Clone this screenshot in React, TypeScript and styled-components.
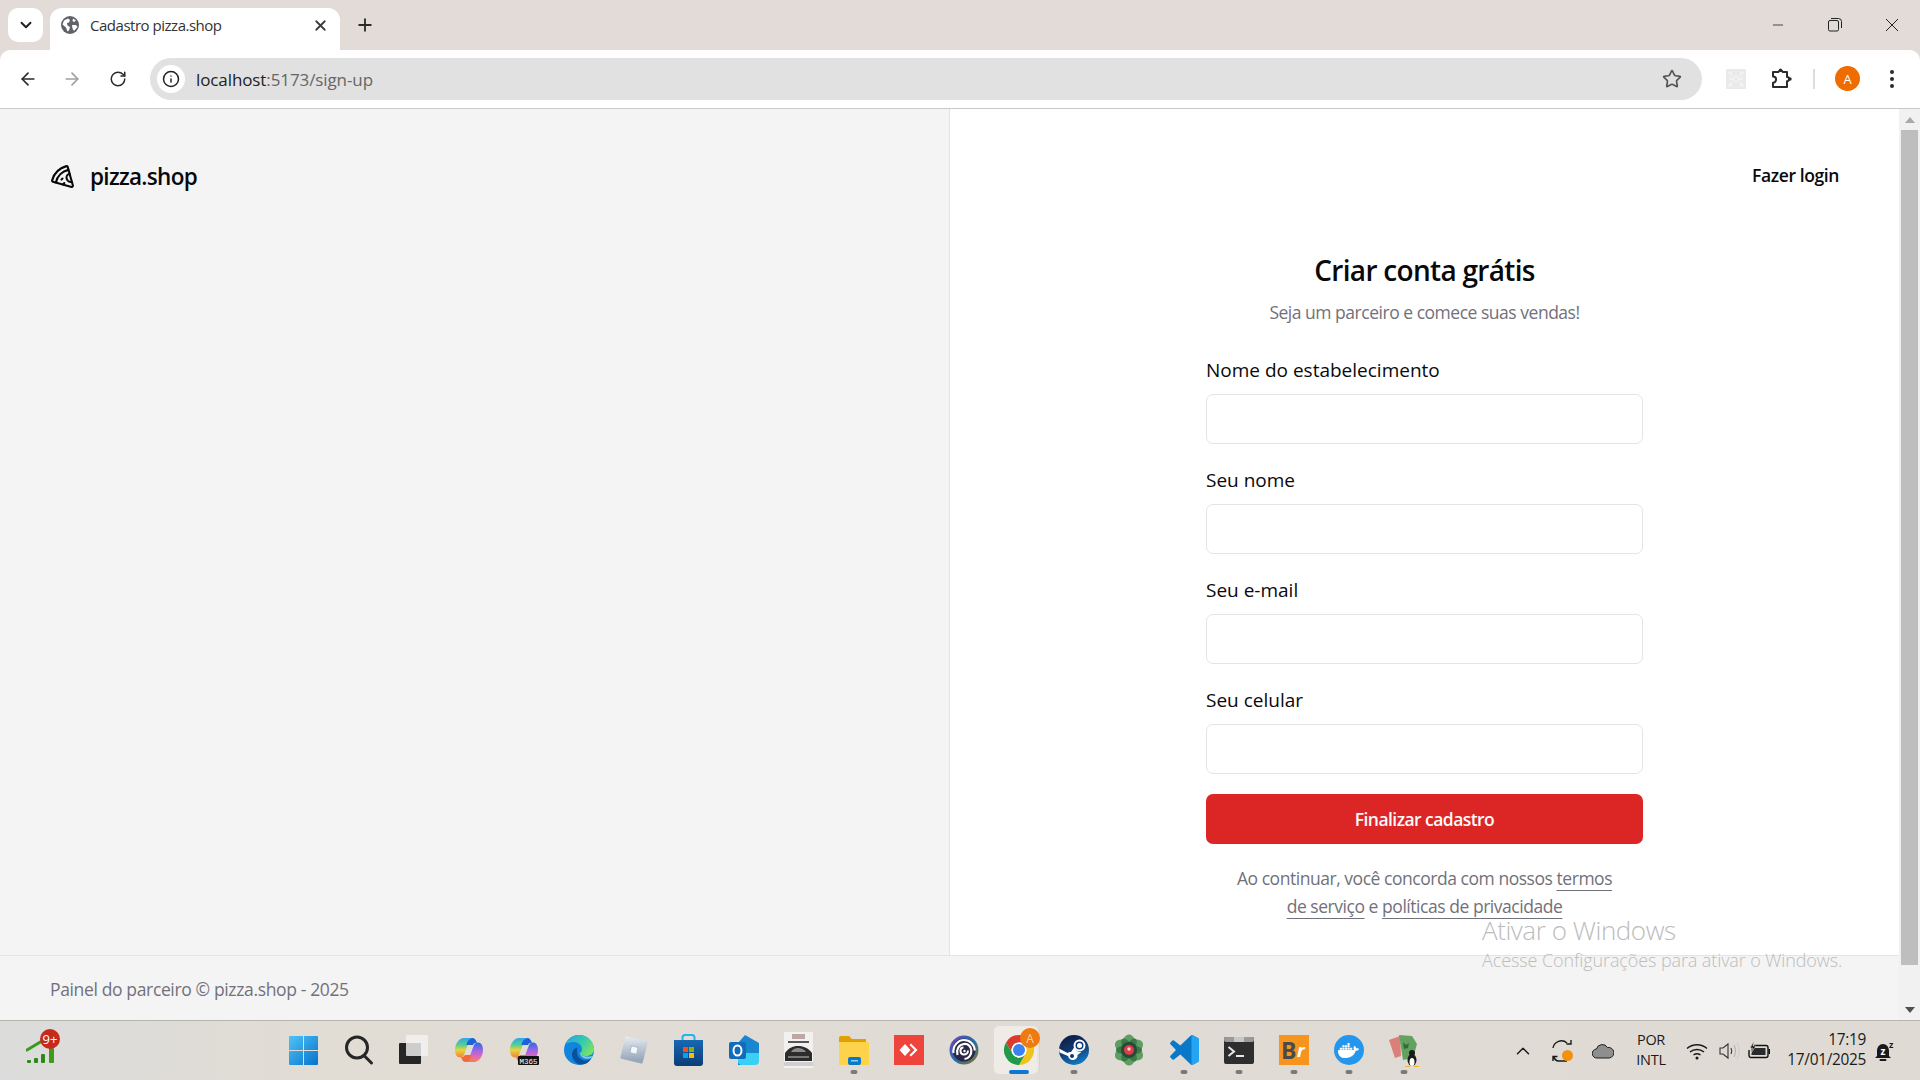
import React from "react";
import styled, { createGlobalStyle } from "styled-components";
import { ArrowLeft, ArrowRight, RotateCw, Info, Star, ChevronDown, ChevronUp, Plus, X, Minus, Pizza } from "lucide-react";
import { SiDocker } from "react-icons/si";

const FONT = `"Open Sans", "Noto Sans", "Liberation Sans", sans-serif`;

const Global = createGlobalStyle`
  html, body { margin: 0; padding: 0; background: #fff; overflow: hidden; }
  * { box-sizing: border-box; }
  body { font-family: ${FONT}; }
`;

const Screen = styled.div`
  position: relative;
  width: 1920px;
  height: 1080px;
  overflow: hidden;
  display: flex;
  flex-direction: column;
`;

const TabStrip = styled.div`
  height: 50px;
  background: #e2dbd8;
  display: flex;
  align-items: flex-start;
  padding-top: 8px;
  padding-left: 8px;
  flex: none;
`;
const TabListButton = styled.button`
  width: 35px;
  height: 34px;
  border: 0;
  border-radius: 10px;
  background: #fff;
  color: #1f1f1f;
  display: flex;
  align-items: center;
  justify-content: center;
  padding: 0;
`;
const Tab = styled.div`
  width: 290px;
  height: 42px;
  margin-left: 7px;
  background: #fff;
  border-radius: 12px 12px 0 0;
  display: flex;
  align-items: center;
  padding: 0 11px 8px 11px;
  gap: 11px;
  color: #3c3c3c;
`;
const TabTitle = styled.span`
  flex: 1;
  font-size: 15px;
  letter-spacing: -0.48px;
  color: #333;
`;
const NewTab = styled.div`
  margin-left: 15px;
  height: 34px;
  display: flex;
  align-items: center;
  color: #2a2a2a;
`;
const WindowControls = styled.div`
  margin-left: auto;
  height: 34px;
  display: flex;
  align-items: center;
  color: #222;
`;
const WindowButton = styled.div`
  width: 57px;
  display: flex;
  justify-content: center;
`;

const Toolbar = styled.div`
  height: 59px;
  flex: none;
  background: #e2dbd8;
`;
const ToolbarInner = styled.div`
  height: 59px;
  background: #fff;
  border-radius: 10px 10px 0 0;
  border-bottom: 1px solid #c9c9c9;
  display: flex;
  align-items: center;
  padding-bottom: 1px;
`;
const NavButton = styled.div<{ $w: number; $dim?: boolean }>`
  width: ${(p) => p.$w}px;
  display: flex;
  justify-content: center;
  color: ${(p) => (p.$dim ? "#a0a0a0" : "#2b2b2b")};
`;
const BackButton = styled(NavButton)`
  padding-left: 2px;
`;
const ReloadButton = styled(NavButton)`
  padding-left: 2px;
`;
const Omnibox = styled.div`
  width: 1552px;
  height: 42px;
  margin-left: 6px;
  background: #e1e1e1;
  border-radius: 21px;
  display: flex;
  align-items: center;
  padding: 0 20px 0 7px;
`;
const InfoChip = styled.div`
  width: 28px;
  height: 28px;
  border-radius: 50%;
  background: #fff;
  display: flex;
  align-items: center;
  justify-content: center;
  color: #222;
`;
const Url = styled.div`
  flex: 1;
  margin-left: 11px;
  padding-top: 2px;
  font-size: 17px;
  letter-spacing: -0.1px;
  color: #666;
`;
const UrlHost = styled.span`
  color: #222;
`;
const ToolGroup = styled.div`
  flex: 1;
  display: flex;
  align-items: center;
  padding-left: 24px;
`;
const PuzzleSlot = styled.div`
  width: 50px;
  margin-left: 10px;
  padding-left: 1px;
  display: flex;
  justify-content: center;
`;
const ToolDivider = styled.div`
  width: 2px;
  height: 20px;
  background: #e2dbd8;
  margin: 0 20px 0 7px;
`;
const Avatar = styled.div`
  width: 25px;
  height: 25px;
  border-radius: 50%;
  background: #ef6c00;
  color: #fff;
  font-size: 13px;
  display: flex;
  align-items: center;
  justify-content: center;
`;
const MenuDots = styled.div`
  margin-left: 30px;
  display: flex;
  flex-direction: column;
  gap: 3px;
`;
const MenuDot = styled.span`
  width: 4px;
  height: 4px;
  border-radius: 50%;
  background: #2b2b2b;
`;

const Viewport = styled.div`
  flex: 1;
  display: flex;
  min-height: 0;
`;
const Content = styled.div`
  flex: 1;
  display: flex;
  flex-direction: column;
`;
const Split = styled.div`
  height: 846px;
  display: flex;
  flex: none;
`;
const LeftPanel = styled.section`
  width: 950px;
  flex: none;
  background: #f4f4f5;
  border-right: 1px solid #e4e4e7;
  padding: 50px;
`;
const Brand = styled.div`
  display: flex;
  align-items: center;
  gap: 15px;
  height: 35px;
  color: #09090b;
`;
const BrandName = styled.span`
  font-size: 22.5px;
  font-weight: 600;
  letter-spacing: -0.7px;
`;
const RightPanel = styled.section`
  flex: 1;
  background: #fff;
  display: flex;
  flex-direction: column;
  align-items: center;
`;
const TopBar = styled.div`
  align-self: stretch;
  display: flex;
  justify-content: flex-end;
  padding: 49px 60px 0 0;
  height: 85px;
`;
const LoginLink = styled.a`
  font-size: 17.5px;
  font-weight: 600;
  letter-spacing: -0.4px;
  line-height: 35px;
  color: #09090b;
`;
const Form = styled.div`
  width: 437px;
  margin-top: 58px;
  display: flex;
  flex-direction: column;
`;
const Title = styled.h1`
  margin: 0;
  font-size: 28px;
  line-height: 36px;
  font-weight: 600;
  text-align: center;
  letter-spacing: -0.7px;
  color: #09090b;
`;
const Subtitle = styled.p`
  margin: 12px 0 35px;
  font-size: 17.5px;
  line-height: 25px;
  text-align: center;
  letter-spacing: -0.48px;
  color: #71717a;
`;
const Field = styled.div`
  display: flex;
  flex-direction: column;
  gap: 14px;
  margin-bottom: 26px;
`;
const Label = styled.label`
  font-size: 19px;
  line-height: 20px;
  letter-spacing: 0;
  color: #09090b;
`;
const Input = styled.input`
  height: 50px;
  border: 1px solid #e4e4e7;
  border-radius: 7px;
  background: #fff;
  outline: none;
`;
const Submit = styled.button`
  height: 50px;
  margin-top: -6px;
  border: 0;
  border-radius: 7px;
  background: #dc2626;
  color: #fafafa;
  font-family: ${FONT};
  font-size: 17.5px;
  font-weight: 600;
  letter-spacing: -0.55px;
`;
const Terms = styled.p`
  margin: 20px 0 0;
  font-size: 17.5px;
  line-height: 28px;
  text-align: center;
  letter-spacing: -0.46px;
  color: #71717a;
`;
const TermsLink = styled.a`
  text-decoration: underline;
  text-underline-offset: 5px;
`;
const Footer = styled.footer`
  flex: 1;
  background: #f4f4f5;
  border-top: 1px solid #e4e4e7;
  padding: 21px 50px 0;
  font-size: 17.5px;
  line-height: 24px;
  letter-spacing: -0.36px;
  color: #71717a;
`;
const Scrollbar = styled.div`
  width: 21px;
  flex: none;
  background: #f1f1f1;
  display: flex;
  flex-direction: column;
  align-items: center;
  padding: 0 1px;
`;
const ScrollArrow = styled.div<{ $up?: boolean; $color: string }>`
  height: 21px;
  flex: none;
  display: flex;
  align-items: center;
  &::before {
    content: "";
    border-left: 5px solid transparent;
    border-right: 5px solid transparent;
    ${(p) => (p.$up ? "border-bottom" : "border-top")}: 6px solid ${(p) => p.$color};
  }
`;
const ScrollThumb = styled.div`
  width: 17px;
  height: 835px;
  flex: none;
  background: #bebebe;
`;
const ScrollSpace = styled.div`
  flex: 1;
`;

const Watermark = styled.div`
  position: absolute;
  left: 1482px;
  top: 911px;
  pointer-events: none;
  color: #bcbcbc;
`;
const WatermarkTitle = styled.div`
  font-size: 26px;
  line-height: 38px;
  letter-spacing: -0.45px;
  font-weight: 300;
`;
const WatermarkText = styled.div`
  font-size: 18px;
  line-height: 22px;
  letter-spacing: -0.1px;
  font-weight: 300;
`;

const Taskbar = styled.div`
  height: 60px;
  flex: none;
  background: linear-gradient(90deg, #dcdcdc 0, #e1dcd4 320px, #dfdbd4 100%);
  border-top: 1px solid #b7b5b0;
  display: flex;
  align-items: stretch;
`;
const Widgets = styled.div`
  width: 276px;
  flex: none;
  padding: 8px 0 0 26px;
`;
const TaskRow = styled.div`
  display: flex;
  width: 1155px;
  flex: none;
`;
const TaskSlot = styled.div<{ $active?: boolean }>`
  position: relative;
  width: 55px;
  height: 59px;
  display: flex;
  align-items: center;
  justify-content: center;
  padding-bottom: 1px;
  ${(p) =>
    p.$active &&
    `&::before {
      content: "";
      position: absolute;
      left: 3px; right: 9px; top: 5px; bottom: 6px;
      background: #efece7;
      border-radius: 5px;
      box-shadow: 2px 0 0 #e8e4de, 3px 0 0 #d6d3cd;
    }`}
  & > svg { position: relative; overflow: visible; }
`;
const RunDot = styled.span<{ $active?: boolean }>`
  position: absolute;
  left: 50%;
  bottom: 6px;
  transform: translateX(-50%);
  width: ${(p) => (p.$active ? 20 : 7)}px;
  height: 4px;
  border-radius: 2px;
  background: ${(p) => (p.$active ? "#0a78d4" : "#7a7a7a")};
`;
const Tray = styled.div`
  flex: 1;
  display: flex;
  align-items: center;
  padding-left: 72px;
  color: #1a1a1a;
`;
const TraySlot = styled.div<{ $w: number }>`
  width: ${(p) => p.$w}px;
  flex: none;
  display: flex;
  justify-content: center;
  align-items: center;
`;
const TrayText = styled.div`
  font-size: 14.5px;
  line-height: 20px;
  margin-top: -2px;
  text-align: center;
  letter-spacing: -0.3px;
  color: #1a1a1a;
`;
const Clock = styled.div`
  width: 92px;
  flex: none;
  font-size: 15.4px;
  line-height: 20px;
  margin-top: -2px;
  text-align: right;
  letter-spacing: -0.3px;
  color: #1a1a1a;
`;
const DockerTile = styled.div`
  width: 30px;
  height: 30px;
  border-radius: 50%;
  background: #2496ed;
  display: flex;
  align-items: center;
  justify-content: center;
  color: #fff;
`;

const Globe = () => (
  <svg width="18" height="18" viewBox="0 0 18 18">
    <circle cx="9" cy="9" r="9" fill="#5f6368" />
    <path d="M3 4.500 7 2.500 9 4 8 6.500 6 7 6.500 9.500 9 11 8 14.500 6.500 15.500 5 11.500 1.500 8.500Z" fill="#fff" />
    <path d="M11 9h4l1.500 2-3.500 4-1.500-2.500zM12 2.500l3 2-2 1.500-1.500-1z" fill="#fff" />
  </svg>
);
const Restore = () => (
  <svg width="14" height="14" viewBox="0 0 14 14" fill="none" stroke="#222" strokeWidth="1">
    <rect x="0.5" y="2.5" width="10" height="10.5" rx="1.5" />
    <path d="M3 .5h7.500a3 3 0 0 1 3 3V10" />
  </svg>
);
const CloseThin = () => (
  <svg width="14" height="14" viewBox="0 0 14 14" stroke="#222" strokeWidth="1">
    <path d="M1 1l12 12M13 1 1 13" />
  </svg>
);
const ExtensionTile = () => (
  <svg width="20" height="20" viewBox="0 0 20 20">
    <rect width="20" height="20" rx="1" fill="#eaeaea" />
    <g stroke="#f8f8f8" strokeWidth="1" fill="none">
      <circle cx="10" cy="10" r="2.5" />
      <path d="M2 3l5 4M18 3l-5 4M2 17l5-4M18 17l-5-4M3 10h4M13 10h4M5 2v3M15 2v3M5 15v3M15 15v3" />
    </g>
  </svg>
);
const PuzzleIcon = () => (
  <svg width="22" height="22" viewBox="0 0 22 22" fill="none" stroke="#2b2b2b" strokeWidth="2" strokeLinejoin="round">
    <path d="M2 4h5.500a2.200 2.200 0 0 1 4.200 0H16v5a2 2 0 0 1 0 4.200V19H2v-4.300a3 3 0 0 0 0-6.200z" />
    <circle cx="19" cy="11" r="1.700" fill="#2b2b2b" stroke="none" />
    <circle cx="9.500" cy="2.200" r="1.700" fill="#2b2b2b" stroke="none" />
  </svg>
);

const Signal = () => (
  <svg width="34" height="44" viewBox="0 0 34 44">
    <path d="M1 21 16 12" stroke="#3a9a1c" strokeWidth="3" strokeLinecap="round" />
    <rect x="1" y="31" width="4" height="3" rx="1" fill="#2d8a14" />
    <rect x="8" y="29" width="4" height="5" rx="1" fill="#2d8a14" />
    <rect x="15" y="25" width="4" height="9" rx="1" fill="#2d8a14" />
    <rect x="23" y="19" width="5" height="15" rx="1" fill="#3f9a1e" />
    <circle cx="24" cy="10" r="10" fill="#c72a1d" />
    <text x="24" y="15" textAnchor="middle" fontSize="13" fill="#fff" fontFamily={FONT}>9+</text>
  </svg>
);

const WinLogo = () => (
  <svg width="29" height="29" viewBox="0 0 29 29">
    <defs>
      <linearGradient id="win" x1="0" y1="0" x2="1" y2="1">
        <stop offset="0" stopColor="#4fc3f7" />
        <stop offset="1" stopColor="#0672cc" />
      </linearGradient>
    </defs>
    <path d="M0 1a1 1 0 0 1 1-1h13v14H0zM15 0h13a1 1 0 0 1 1 1v13H15zM0 15h14v14H1a1 1 0 0 1-1-1zM15 15h14v13a1 1 0 0 1-1 1H15z" fill="url(#win)" />
  </svg>
);
const SearchGlyph = () => (
  <svg width="30" height="30" viewBox="0 0 30 30" fill="none" stroke="#262626" strokeWidth="3">
    <circle cx="13" cy="12.500" r="10.500" />
    <path d="M20.500 21l7 7" strokeLinecap="round" />
  </svg>
);
const TaskView = () => (
  <svg width="30" height="30" viewBox="0 0 30 30">
    <rect x="0" y="8" width="22" height="21" rx="1" fill="#262626" />
    <rect x="7" y="0" width="22" height="21" rx="1" fill="#f3f3f3" fillOpacity="0.82" />
  </svg>
);
const Copilot = ({ m365 }: { m365?: boolean }) => {
  const k = m365 ? "m" : "c";
  return (
    <svg width="28" height="30" viewBox="0 0 28 30">
      <defs>
        <linearGradient id={`${k}l`} x1="0" y1="0" x2="0" y2="1">
          <stop offset="0" stopColor="#2aa7ee" />
          <stop offset="0.38" stopColor="#5fd08a" />
          <stop offset="0.62" stopColor="#e9d43c" />
          <stop offset="1" stopColor="#f2803a" />
        </linearGradient>
        <linearGradient id={`${k}r`} x1="0" y1="0" x2="0" y2="1">
          <stop offset="0" stopColor="#2b6be0" />
          <stop offset="0.45" stopColor="#a964e6" />
          <stop offset="0.8" stopColor="#f06c9f" />
          <stop offset="1" stopColor="#f2803a" />
        </linearGradient>
      </defs>
      <path d="M9 3C4 3 0 9 0 15c0 3 1 6 3 7 3 1 5 0 6-2l3-8c1-3 2-6 5-9z" fill={`url(#${k}l)`} />
      <path d="M19 27c5 0 9-6 9-12 0-3-1-6-3-7-3-1-5 0-6 2l-3 8c-1 3-2 6-5 9z" fill={`url(#${k}r)`} />
      <path d="M9 3h8c3 0 4 2 5 5-2-.5-3 .5-4 2h-6.500c.5-3 1.500-5 5.500-7z" fill="#1d62d8" />
      <path d="M19 27h-8c-3 0-4-2-5-5 2 .5 3-.5 4-2h6.500c-.5 3-1.500 5-5.500 7z" fill="#ef6a3a" />
      {m365 && (
        <>
          <rect x="8" y="21" width="21" height="9" rx="1" fill="#111" />
          <text x="18.500" y="28.500" textAnchor="middle" fontSize="7.500" fill="#fff" fontFamily="'Liberation Mono', monospace">M365</text>
        </>
      )}
    </svg>
  );
};
const Edge = () => (
  <svg width="30" height="30" viewBox="0 0 30 30">
    <defs>
      <linearGradient id="edgeG" x1="0" y1="0" x2="1" y2="0.6">
        <stop offset="0" stopColor="#2c9fe6" />
        <stop offset="0.55" stopColor="#31c9b0" />
        <stop offset="1" stopColor="#76e06c" />
      </linearGradient>
    </defs>
    <circle cx="15" cy="15" r="15" fill="#1184dc" />
    <path d="M1.500 9C4 3.500 9 0 15 0c9 0 15 7 15 14 0 5-4 7-8 7-3 0-6-1-6.500-2.500 1-.7 2.500-2 2.500-4.500 0-4-4-7-8-7-4 0-7 1-9 2z" fill="url(#edgeG)" />
    <path d="M13.500 12.500C9 13.500 7 18 8.500 22.500 10 27 14 30 18.500 29.500c3.500-.5 6-2 8.500-5.500-3.500 2-8 2-11-.5-3-2.500-3.500-7.500-2.500-11z" fill="#0b4f9e" />
    <path d="M16 19c1 3 4 5 8 4.800 2.500-.2 4.500-1.300 5.300-3.300-1 .7-4 1.500-7.300 1-3-.4-5-1.500-6-2.500z" fill="#a8e6d8" opacity="0.75" />
  </svg>
);
const Cube = () => (
  <svg width="30" height="30" viewBox="0 0 30 30">
    <defs>
      <linearGradient id="cube" x1="0" y1="0" x2="0.3" y2="1">
        <stop offset="0" stopColor="#e8edf2" />
        <stop offset="1" stopColor="#98a8ba" />
      </linearGradient>
    </defs>
    <rect x="3.500" y="3.500" width="23" height="23" rx="1.500" transform="rotate(14 15 15)" fill="url(#cube)" />
    <rect x="11.500" y="11.500" width="7" height="7" transform="rotate(14 15 15)" fill="#f4f6f8" stroke="#a9b7c6" />
  </svg>
);
const StoreBag = () => (
  <svg width="29" height="32" viewBox="0 0 29 32">
    <defs>
      <linearGradient id="bag" x1="0" y1="0" x2="0" y2="1">
        <stop offset="0" stopColor="#1868b3" />
        <stop offset="1" stopColor="#0a3d75" />
      </linearGradient>
    </defs>
    <path d="M8.500 6V3.500A2.500 2.500 0 0 1 11 1h7a2.500 2.500 0 0 1 2.500 2.500V6" fill="none" stroke="#24b5ea" strokeWidth="2" />
    <path d="M0 6h29v23a3 3 0 0 1-3 3H3a3 3 0 0 1-3-3z" fill="url(#bag)" />
    <rect x="9" y="13" width="5" height="5" fill="#f25022" />
    <rect x="15" y="13" width="5" height="5" fill="#7fba00" />
    <rect x="9" y="19" width="5" height="5" fill="#00a4ef" />
    <rect x="15" y="19" width="5" height="5" fill="#ffb900" />
  </svg>
);
const Outlook = () => (
  <svg width="30" height="30" viewBox="0 0 30 30">
    <path d="M16 0l14 8v12l-14 10H9V8z" fill="#1a86d0" />
    <path d="M9 18h21v8a4 4 0 0 1-4 4H13a4 4 0 0 1-4-4z" fill="#3ad0f5" />
    <rect x="0" y="7" width="17" height="17" rx="2" fill="#0f6cbd" />
    <ellipse cx="8.500" cy="15.500" rx="4" ry="5" fill="none" stroke="#fff" strokeWidth="2" />
  </svg>
);
const Asphalt = () => (
  <svg width="29" height="36" viewBox="0 0 29 36">
    <rect width="29" height="36" fill="#f2f1ef" />
    <rect x="8" y="2" width="13" height="5" fill="#bda6a6" />
    <rect x="4" y="9" width="21" height="2" fill="#555" />
    <path d="M1 21c4-5 7-7 13-7s10 2 14 7v8H1z" fill="#2c2c2c" />
    <path d="M7 20c2-3 4-4 7-4s6 1 8 4z" fill="#8d8d8d" />
    <rect x="4" y="24" width="21" height="2" fill="#777" />
    <path d="M0 30h29v4H0z" fill="#cfcfcf" />
  </svg>
);
const Folder = () => (
  <svg width="30" height="30" viewBox="0 0 30 30">
    <path d="M0 3a2 2 0 0 1 2-2h8l3 3h14v6H0z" fill="#e0a100" />
    <path d="M0 7h30v23H0z" fill="#ffd24c" />
    <rect x="9" y="22" width="13" height="8" rx="2" fill="#0a78c8" />
    <rect x="12" y="25" width="7" height="1.500" fill="#8fd0f5" />
  </svg>
);
const AnyDesk = () => (
  <svg width="30" height="30" viewBox="0 0 30 30">
    <rect width="30" height="30" fill="#ef443b" />
    <path d="M11 9l5.500 6-5.500 6-5.500-6z" fill="#fff" />
    <path d="M17 8.500l6.500 6.500-6.500 6.500-1.500-1.500 5-5-5-5z" fill="#fff" />
  </svg>
);
const Ubisoft = () => (
  <svg width="30" height="30" viewBox="0 0 30 30" fill="none">
    <defs>
      <linearGradient id="ubi" x1="0" y1="0" x2="1" y2="1">
        <stop offset="0" stopColor="#7a3fb5" />
        <stop offset="0.5" stopColor="#1c6fb0" />
        <stop offset="1" stopColor="#8f7a1d" />
      </linearGradient>
    </defs>
    <circle cx="15" cy="15" r="14.500" fill="url(#ubi)" />
    <circle cx="15" cy="15" r="11.500" fill="#2a2748" />
    <path d="M4.500 18C3.500 11 9 5 15 5s10.500 4.500 10.800 10.500" stroke="#fff" strokeWidth="2.200" />
    <path d="M8.500 20c-1.500-5 1-10.500 6.500-11 4.500-.4 7 2.500 7.300 6.500.3 4-2.300 8-6.800 8.500" stroke="#fff" strokeWidth="2.200" />
    <path d="M19 15.500c0 2.500-2 4-4 4-2.500 0-3.500-2-3.500-4 0-2 1.500-3 3-3" stroke="#fff" strokeWidth="2" />
    <circle cx="15.500" cy="16" r="1.200" fill="#fff" />
  </svg>
);
const Chrome = () => (
  <svg width="30" height="30" viewBox="0 0 30 30">
    <path d="M2 7.500A15 15 0 0 1 28 7.500L15 7.500A7.500 7.500 0 0 0 8.500 18.750Z" fill="#dd3a2d" />
    <path d="M28 7.500A15 15 0 0 1 15 30L21.500 18.750A7.500 7.500 0 0 0 15 7.500Z" fill="#f1c21b" />
    <path d="M15 30A15 15 0 0 1 2 7.500L8.500 18.750A7.500 7.500 0 0 0 21.500 18.750Z" fill="#1f9a46" />
    <circle cx="15" cy="15" r="7.500" fill="#fff" />
    <circle cx="15" cy="15" r="6" fill="#3b82f0" />
    <circle cx="26" cy="3" r="10" fill="#ef7a10" />
    <text x="26" y="7.500" textAnchor="middle" fontSize="12" fill="#f7d3ad" fontFamily={FONT}>A</text>
  </svg>
);
const Steam = () => (
  <svg width="30" height="30" viewBox="0 0 30 30" fill="none">
    <defs>
      <linearGradient id="steam" x1="0.3" y1="0" x2="0.7" y2="1">
        <stop offset="0" stopColor="#0e1c40" />
        <stop offset="0.5" stopColor="#0e3c78" />
        <stop offset="1" stopColor="#1182c8" />
      </linearGradient>
    </defs>
    <circle cx="15" cy="15" r="15" fill="url(#steam)" />
    <path d="M.5 17.500 9 21c1 3.500 4 5 7 3.500 2-1 3-3 2.500-4.500l4-3c-3 .5-6.500-1.500-7-5l-3.500 5c-1.500 0-2.500.3-3.500 1L0 13.500z" fill="#fff" />
    <circle cx="20.500" cy="10.500" r="5" stroke="#fff" strokeWidth="2" />
    <circle cx="20.500" cy="10.500" r="2.500" fill="#fff" />
    <circle cx="13" cy="21" r="2" fill="#123a72" />
  </svg>
);
const Atom = () => (
  <svg width="30" height="32" viewBox="0 0 30 32">
    <g transform="translate(15 16)">
      {[0, 60, 120].map((a) => (
        <ellipse key={a} cx="0" cy="0" rx="8" ry="15.500" fill="#5e9e62" transform={`rotate(${a})`} />
      ))}
      {[30, 90, 150].map((a) => (
        <ellipse key={a} cx="0" cy="0" rx="5" ry="13" fill="#3a7a47" transform={`rotate(${a})`} />
      ))}
      <circle r="8" fill="#27493a" />
      <circle r="5" fill="#df3d48" />
      <circle cx="0" cy="-1" r="1.700" fill="#f8d6d6" />
    </g>
  </svg>
);
const VSCode = () => (
  <svg width="30" height="30" viewBox="0 0 100 100">
    <path d="M74.900 99.600a6 6 0 0 0 4.700-.2L96.400 90a6 6 0 0 0 3.600-5.500V15.500A6 6 0 0 0 96.400 10L79.600.6a6 6 0 0 0-7 1.200L37.800 34.600 16.600 18.500a4 4 0 0 0-5.100.2L4.900 24.900a4 4 0 0 0 0 5.900L23.200 50 4.900 69.200a4 4 0 0 0 0 5.900l6.600 6.200a4 4 0 0 0 5.100.2l21.200-16.100 34.800 32.800a6 6 0 0 0 2.300 1.400zM75 27.300 48.600 50 75 72.700z" fill="#0a78c8" />
    <path d="M74.900 99.600a6 6 0 0 0 4.700-.2L96.400 90a6 6 0 0 0 3.600-5.500V15.500A6 6 0 0 0 96.400 10L79.600.6a6 6 0 0 0-4.700-.3z" fill="#23a5f2" />
  </svg>
);
const Terminal = () => (
  <svg width="30" height="27" viewBox="0 0 30 27">
    <rect width="30" height="27" rx="2" fill="#2e2e2e" />
    <rect x="0" y="0" width="30" height="5" rx="2" fill="#9a9a9a" />
    <rect x="10" y="0" width="10" height="5" fill="#c8c8c8" />
    <path d="M4.500 10l5.500 4.500L4.500 19" fill="none" stroke="#e6e6e6" strokeWidth="2" />
    <rect x="12" y="18" width="8" height="2" fill="#e6e6e6" />
  </svg>
);
const Brackets = () => (
  <svg width="30" height="30" viewBox="0 0 30 30">
    <rect width="30" height="30" fill="#f7941e" />
    <text x="2" y="24" fontSize="23" fontWeight="700" fill="#4a4a4a" fontFamily={FONT}>B</text>
    <text x="18" y="22" fontSize="18" fontWeight="700" fill="#fff" fontStyle="italic" fontFamily={FONT}>r</text>
  </svg>
);
const Kali = () => (
  <svg width="30" height="34" viewBox="0 0 30 34">
    <path d="M0 7l11-4 1 20-6 2z" fill="#d9807a" />
    <path d="M10 2l13 1 5 8-4 14-10 2z" fill="#62a15f" />
    <path d="M14 9l3 3 3-2-1 5-4 1z" fill="#2f6d33" />
    <ellipse cx="23" cy="27" rx="4.500" ry="6" fill="#1a1a1a" />
    <ellipse cx="23" cy="29" rx="2.500" ry="4" fill="#fff" />
    <circle cx="23" cy="20" r="3" fill="#1a1a1a" />
    <path d="M16 33h5v1h-5zM25 33h5v1h-5z" fill="#f0b429" />
  </svg>
);

const SyncIcon = () => (
  <svg width="22" height="28" viewBox="0 0 22 28" fill="none" stroke="#1a1a1a" strokeWidth="1.400">
    <path d="M1 11a8.500 8.500 0 0 1 14-5M19 3v4h-4.500" />
    <path d="M15 24H6a5 5 0 0 1-4-4M1 24v-4.500h4.500" />
    <circle cx="15.500" cy="18.500" r="5.500" fill="#f79009" stroke="none" />
  </svg>
);
const CloudIcon = () => (
  <svg width="22" height="16" viewBox="0 0 22 16">
    <path d="M5 15a4.500 4.500 0 0 1-.5-9 6 6 0 0 1 11-1.500A5 5 0 0 1 17.500 15z" fill="#8e8e8e" stroke="#1c1c1c" strokeWidth="1" />
  </svg>
);
const WifiIcon = () => (
  <svg width="22" height="18" viewBox="0 0 22 18" fill="none" stroke="#1a1a1a" strokeWidth="1.500">
    <path d="M1 6.500c5.500-5 14.500-5 20 0M4 10c4-3.500 10-3.500 14 0M7.500 13c2-1.500 5-1.500 7 0" />
    <circle cx="11" cy="16" r="1.500" fill="#1a1a1a" stroke="none" />
  </svg>
);
const SpeakerIcon = () => (
  <svg width="22" height="20" viewBox="0 0 22 20" fill="none" stroke="#333" strokeWidth="1.100">
    <path d="M1 7v6h3l5 4V3L4 7z" />
    <path d="M12 7c1 2 1 4 0 6" />
    <path d="M15 4c2 4 2 8 0 12" stroke="#b4b4b4" />
    <path d="M18 2c3 5 3 11 0 16" stroke="#cccccc" />
  </svg>
);
const BatteryIcon = () => (
  <svg width="22" height="20" viewBox="0 0 22 20">
    <path d="M6 4.500h12a2 2 0 0 1 2 2v8a2 2 0 0 1-2 2H3a2 2 0 0 1-2-2V9" fill="none" stroke="#111" strokeWidth="1.400" />
    <rect x="3.500" y="7" width="14" height="7" fill="#2a2a2a" />
    <rect x="20.500" y="8" width="1.500" height="5" fill="#111" />
    <path d="M6 0 2 7h3L3 12l5-7H5z" fill="#111" stroke="#dfdbd4" strokeWidth="0.600" />
  </svg>
);
const BellIcon = () => (
  <svg width="24" height="24" viewBox="0 0 24 24">
    <path d="M3 17v-5c0-4 2.500-7 6-7s6 3 6 7v5l2 2H1z" fill="#1a1a1a" />
    <rect x="5.500" y="20" width="7" height="2" rx="1" fill="#1a1a1a" />
    <text x="9" y="16" fontSize="10" fill="#fff" textAnchor="middle" fontFamily={FONT} fontWeight="700">z</text>
    <text x="15" y="9" fontSize="9" fill="#1a1a1a" fontFamily={FONT} fontWeight="700">z</text>
  </svg>
);

const tasks: { node: React.ReactNode; run?: boolean; active?: boolean }[] = [
  { node: <WinLogo /> },
  { node: <SearchGlyph /> },
  { node: <TaskView /> },
  { node: <Copilot /> },
  { node: <Copilot m365 /> },
  { node: <Edge /> },
  { node: <Cube /> },
  { node: <StoreBag /> },
  { node: <Outlook /> },
  { node: <Asphalt /> },
  { node: <Folder />, run: true },
  { node: <AnyDesk /> },
  { node: <Ubisoft /> },
  { node: <Chrome />, run: true, active: true },
  { node: <Steam />, run: true },
  { node: <Atom /> },
  { node: <VSCode />, run: true },
  { node: <Terminal />, run: true },
  { node: <Brackets />, run: true },
  { node: <DockerTile><SiDocker size={21} /></DockerTile>, run: true },
  { node: <Kali />, run: true },
];

const fields = ["Nome do estabelecimento", "Seu nome", "Seu e-mail", "Seu celular"];

export default function App() {
  return (
    <Screen>
      <Global />
      <TabStrip>
        <TabListButton><ChevronDown size={18} strokeWidth={2.5} /></TabListButton>
        <Tab>
          <Globe />
          <TabTitle>Cadastro pizza.shop</TabTitle>
          <X size={17} strokeWidth={2.5} />
        </Tab>
        <NewTab><Plus size={20} strokeWidth={2.2} /></NewTab>
        <WindowControls>
          <WindowButton><Minus size={16} strokeWidth={1.2} /></WindowButton>
          <WindowButton><Restore /></WindowButton>
          <WindowButton><CloseThin /></WindowButton>
        </WindowControls>
      </TabStrip>
      <Toolbar>
        <ToolbarInner>
          <BackButton $w={54}><ArrowLeft size={20} strokeWidth={2} /></BackButton>
          <NavButton $w={36} $dim><ArrowRight size={20} strokeWidth={2} /></NavButton>
          <ReloadButton $w={54}><RotateCw size={18} strokeWidth={2} /></ReloadButton>
          <Omnibox>
            <InfoChip><Info size={18} strokeWidth={2} /></InfoChip>
            <Url><UrlHost>localhost</UrlHost>:5173/sign-up</Url>
            <Star size={20} color="#555" strokeWidth={2} />
          </Omnibox>
          <ToolGroup>
            <ExtensionTile />
            <PuzzleSlot><PuzzleIcon /></PuzzleSlot>
            <ToolDivider />
            <Avatar>A</Avatar>
            <MenuDots><MenuDot /><MenuDot /><MenuDot /></MenuDots>
          </ToolGroup>
        </ToolbarInner>
      </Toolbar>
      <Viewport>
        <Content>
          <Split>
            <LeftPanel>
              <Brand>
                <Pizza size={25} strokeWidth={2} />
                <BrandName>pizza.shop</BrandName>
              </Brand>
            </LeftPanel>
            <RightPanel>
              <TopBar><LoginLink>Fazer login</LoginLink></TopBar>
              <Form>
                <Title>Criar conta grátis</Title>
                <Subtitle>Seja um parceiro e comece suas vendas!</Subtitle>
                {fields.map((f) => (
                  <Field key={f}>
                    <Label>{f}</Label>
                    <Input />
                  </Field>
                ))}
                <Submit>Finalizar cadastro</Submit>
                <Terms>
                  Ao continuar, você concorda com nossos <TermsLink>termos</TermsLink>
                  <br />
                  <TermsLink>de serviço</TermsLink> e <TermsLink>políticas de privacidade</TermsLink>
                </Terms>
              </Form>
            </RightPanel>
          </Split>
          <Footer>Painel do parceiro © pizza.shop - 2025</Footer>
        </Content>
        <Scrollbar>
          <ScrollArrow $up $color="#a8a8a8" />
          <ScrollThumb />
          <ScrollSpace />
          <ScrollArrow $color="#505050" />
        </Scrollbar>
      </Viewport>
      <Taskbar>
        <Widgets><Signal /></Widgets>
        <TaskRow>
          {tasks.map((t, i) => (
            <TaskSlot key={i} $active={t.active}>
              {t.node}
              {t.run && <RunDot $active={t.active} />}
            </TaskSlot>
          ))}
        </TaskRow>
        <Tray>
          <TraySlot $w={40}><ChevronUp size={22} strokeWidth={1.6} /></TraySlot>
          <TraySlot $w={40}><SyncIcon /></TraySlot>
          <TraySlot $w={40}><CloudIcon /></TraySlot>
          <TraySlot $w={56}><TrayText>POR<br />INTL</TrayText></TraySlot>
          <TraySlot $w={36}><WifiIcon /></TraySlot>
          <TraySlot $w={29}><SpeakerIcon /></TraySlot>
          <TraySlot $w={30}><BatteryIcon /></TraySlot>
          <Clock>17:19<br />17/01/2025</Clock>
          <TraySlot $w={40}><BellIcon /></TraySlot>
        </Tray>
      </Taskbar>
      <Watermark>
        <WatermarkTitle>Ativar o Windows</WatermarkTitle>
        <WatermarkText>Acesse Configurações para ativar o Windows.</WatermarkText>
      </Watermark>
    </Screen>
  );
}
